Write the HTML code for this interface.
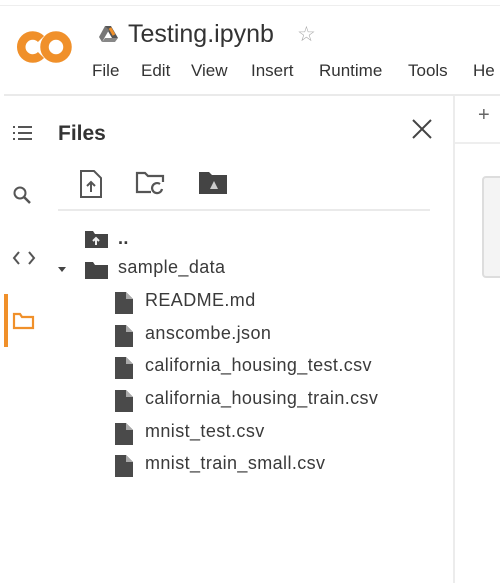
<!DOCTYPE html>
<html><head><style>
body{margin:0;width:500px;height:583px;background:#fff;position:relative;overflow:hidden;font-family:"Liberation Sans",sans-serif;color:#3c3c3c}
.a{position:absolute;white-space:nowrap}
.f{font-size:18px;letter-spacing:0.4px;color:#3a3a3a}
.m{position:absolute;top:61px;font-size:17px;color:#333}
</style></head><body>
<div class="a" style="left:0;top:5px;width:500px;border-top:1px solid #eee"></div>
<svg class="a" style="left:14px;top:28px" width="60" height="38" viewBox="0 0 60 38">
<path d="M27 11 A11.5 11.5 0 1 0 27 27" fill="none" stroke="#f0902a" stroke-width="8.5"/>
<circle cx="42" cy="19" r="11.5" fill="none" stroke="#f0902a" stroke-width="8.5"/></svg>
<svg class="a" style="left:98px;top:24px" width="22" height="20" viewBox="0 0 22 20"><path d="M7 2h6l7 12H14z" fill="#555"/><path d="M7 2L1 13l3 5 7-12z" fill="#777"/><path d="M4 18h13l3-4H7z" fill="#888"/><path d="M12 4l4 7" stroke="#f0902a" stroke-width="3"/></svg>
<div class="a" style="left:128px;top:20px;font-size:25px;color:#333">Testing.ipynb</div>
<div class="a" style="left:297px;top:22px;font-size:21px;color:#aaa">☆</div>
<div class="m" style="left:92px">File</div><div class="m" style="left:141px">Edit</div><div class="m" style="left:191px">View</div><div class="m" style="left:251px">Insert</div><div class="m" style="left:319px">Runtime</div><div class="m" style="left:408px">Tools</div><div class="m" style="left:473px">He</div>
<div class="a" style="left:4px;top:94px;width:496px;border-top:2px solid #eaeaea"></div>
<div class="a" style="left:453px;top:96px;height:487px;border-left:2px solid #ececec"></div>
<div class="a" style="left:478px;top:104px;font-size:20px;color:#666">+</div>
<div class="a" style="left:455px;top:142px;width:45px;border-top:2px solid #eee"></div>
<div class="a" style="left:482px;top:176px;width:30px;height:98px;border:2px solid #ddd;border-radius:4px;background:#f4f4f4"></div>
<svg class="a" style="left:12px;top:125px" width="22" height="16"><g stroke="#555" stroke-width="2"><path d="M1 2h2M6 2h14M1 8h2M6 8h14M1 14h2M6 14h14"/></g></svg>
<svg class="a" style="left:12px;top:185px" width="22" height="22"><circle cx="8" cy="8" r="5.5" fill="none" stroke="#555" stroke-width="2"/><path d="M12 12l6 6" stroke="#555" stroke-width="2.5"/></svg>
<svg class="a" style="left:12px;top:250px" width="24" height="16"><path d="M7 2L2 8l5 6M17 2l5 6-5 6" fill="none" stroke="#555" stroke-width="2"/></svg>
<div class="a" style="left:4px;top:294px;width:4px;height:53px;background:#f0902a"></div>
<svg class="a" style="left:12px;top:311px" width="24" height="20"><path d="M2 3h6l2 3h11v11H2z" fill="none" stroke="#f0902a" stroke-width="2.2"/></svg>
<div class="a" style="left:58px;top:122px;font-size:21px;color:#333;font-weight:bold">Files</div>
<svg class="a" style="left:410px;top:117px" width="24" height="24"><path d="M3 3l18 18M21 3L3 21" stroke="#444" stroke-width="2"/></svg>
<svg class="a" style="left:78px;top:169px" width="26" height="30"><path d="M3 2h13l7 7v19H3z" fill="none" stroke="#555" stroke-width="2"/><path d="M13 23v-9M9 17l4-4 4 4" fill="none" stroke="#555" stroke-width="2"/></svg>
<svg class="a" style="left:135px;top:170px" width="32" height="26"><path d="M16 22H2V3h8l3 3h15v6" fill="none" stroke="#555" stroke-width="2.2"/><path d="M27 19a5 5 0 1 1-2-5" fill="none" stroke="#555" stroke-width="2.2"/></svg>
<svg class="a" style="left:198px;top:171px" width="30" height="24"><path d="M1 1h10l3 3h15v19H1z" fill="#444"/><path d="M12 18l4-8 4 8z" fill="#ccc"/></svg>
<div class="a" style="left:58px;top:209px;width:372px;border-top:2px solid #eaeaea"></div>
<svg class="a" style="left:84px;top:229px" width="26" height="20"><path d="M1 2h8l2 3h13v14H1z" fill="#444"/><path d="M12 16v-6M9 12l3-3 3 3" stroke="#eee" stroke-width="2" fill="none"/></svg>
<div class="a f" style="left:118px;top:228px;font-weight:bold">..</div>
<svg class="a" style="left:56px;top:265px" width="12" height="10"><path d="M2 2h8l-4 5z" fill="#444"/></svg>
<svg class="a" style="left:84px;top:260px" width="26" height="20"><path d="M1 2h8l2 3h13v14H1z" fill="#444"/></svg>
<div class="a f" style="left:118px;top:257px">sample_data</div>
<svg width="0" height="0" style="position:absolute"><defs><symbol id="fi" viewBox="0 0 20 24"><path d="M1 1h11l7 7v15H1z" fill="#4a4a4a"/><path d="M12 1v7h7" fill="#aaa"/></symbol></defs></svg>
<svg class="a" style="left:114px;top:291px" width="20" height="24"><use href="#fi"/></svg><div class="a f" style="left:145px;top:290px">README.md</div>
<svg class="a" style="left:114px;top:324px" width="20" height="24"><use href="#fi"/></svg><div class="a f" style="left:145px;top:323px">anscombe.json</div>
<svg class="a" style="left:114px;top:356px" width="20" height="24"><use href="#fi"/></svg><div class="a f" style="left:145px;top:355px">california_housing_test.csv</div>
<svg class="a" style="left:114px;top:389px" width="20" height="24"><use href="#fi"/></svg><div class="a f" style="left:145px;top:388px">california_housing_train.csv</div>
<svg class="a" style="left:114px;top:422px" width="20" height="24"><use href="#fi"/></svg><div class="a f" style="left:145px;top:421px">mnist_test.csv</div>
<svg class="a" style="left:114px;top:454px" width="20" height="24"><use href="#fi"/></svg><div class="a f" style="left:145px;top:453px">mnist_train_small.csv</div>
</body></html>
